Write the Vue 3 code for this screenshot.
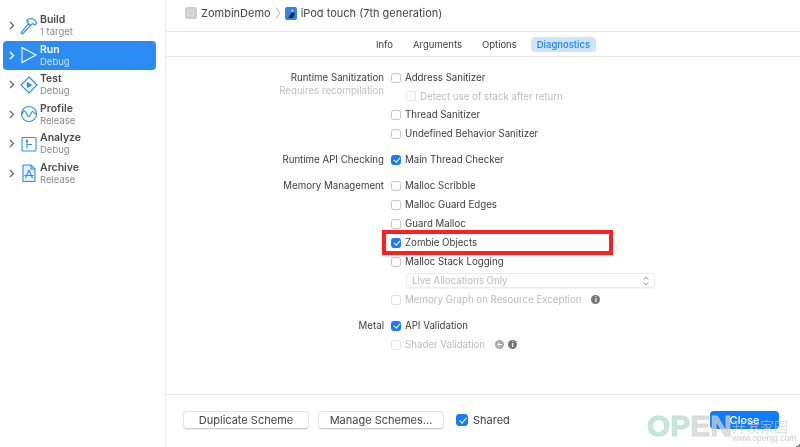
<script setup>
const actions = [
  { id: 'build', title: 'Build', sub: '1 target' },
  { id: 'run', title: 'Run', sub: 'Debug', active: true },
  { id: 'test', title: 'Test', sub: 'Debug' },
  { id: 'profile', title: 'Profile', sub: 'Release' },
  { id: 'analyze', title: 'Analyze', sub: 'Debug' },
  { id: 'archive', title: 'Archive', sub: 'Release' },
]
const tabs = ['Info', 'Arguments', 'Options', 'Diagnostics']
</script>

<template>
  <div class="window">
    <aside class="sidebar">
      <div v-for="a in actions" :key="a.id" class="action" :class="{ active: a.active }">
        <svg class="chev" width="6" height="9" viewBox="0 0 6 9"><path d="M1 1l3.5 3.5L1 8" fill="none" stroke="currentColor" stroke-width="1.3" /></svg>
        <svg class="act-icon" width="18" height="18" viewBox="0 0 18 18" fill="none" stroke="currentColor" stroke-width="1.1">
          <template v-if="a.id === 'build'">
            <path d="M2.5 17l-1.5-1.2L8.3 6.8l2.2 1.7z" />
            <path d="M6.5 3.6C9 1 12.5 1 15 3.2l1.8 3-2.2 1.8-1.8-1.6-2.2 2-3-2.6.6-1.4z" />
          </template>
          <path v-else-if="a.id === 'run'" d="M2 1.5L16 9 2 16.5z" />
          <template v-else-if="a.id === 'test'">
            <path d="M9 1l8 8-8 8-8-8z" stroke-width="1.2" />
            <path d="M6.8 5.5l5.5 3.5-5.5 3.5z" fill="currentColor" stroke="none" />
          </template>
          <template v-else-if="a.id === 'profile'">
            <circle cx="9" cy="9" r="7.5" />
            <path d="M1.8 9.5c1.5-4 3-4.5 4.5-1.5s2.5 5 4 2 2-4.5 3-3 1.5 2 3 1.5" />
          </template>
          <template v-else-if="a.id === 'analyze'">
            <rect x="2" y="2.5" width="14" height="13.5" rx="1" />
            <path d="M7 5.5v8M7 9.5h5M5.8 6.5L7 5l1.2 1.5" />
          </template>
          <template v-else>
            <path d="M3 1h8l4 4v12.5H3z" fill="currentColor" fill-opacity="0.12" />
            <path d="M11 1v4h4" />
            <path d="M9 6l-3.5 8M9 6l3.5 8M4.5 11.5h9" />
          </template>
        </svg>
        <div class="act-text">
          <div class="act-title">{{ a.title }}</div>
          <div class="act-sub">{{ a.sub }}</div>
        </div>
      </div>
    </aside>

    <main class="main">
      <header class="crumbs">
        <span class="proj-icon"><span></span></span>
        <span>ZombinDemo</span>
        <svg width="6" height="12" viewBox="0 0 6 12"><path d="M1 .5L5 6 1 11.5" fill="none" stroke="#9a9a9a" stroke-width="0.8" /></svg>
        <svg class="dev-icon" width="12" height="13" viewBox="0 0 12 13">
          <rect width="12" height="13" rx="2" fill="#2f86e6" />
          <path d="M3 11l4-6 3 1-2 5z" fill="#1b2433" />
          <path d="M6 2.5l2.5 1-1 2z" fill="#e6f0ff" />
        </svg>
        <span>iPod touch (7th generation)</span>
      </header>

      <nav class="tabs">
        <span v-for="t in tabs" :key="t" class="tab" :class="{ on: t === 'Diagnostics' }">{{ t }}</span>
      </nav>

      <section class="form">
        <div class="group">
          <div class="label">Runtime Sanitization<small>Requires recompilation</small></div>
          <div class="opts">
            <label class="row"><i class="box"></i>Address Sanitizer</label>
            <label class="row off sub short"><i class="box"></i>Detect use of stack after return</label>
            <label class="row"><i class="box"></i>Thread Sanitizer</label>
            <label class="row"><i class="box"></i>Undefined Behavior Sanitizer</label>
          </div>
        </div>
        <div class="group">
          <div class="label">Runtime API Checking</div>
          <div class="opts">
            <label class="row"><i class="box checked"></i>Main Thread Checker</label>
          </div>
        </div>
        <div class="group">
          <div class="label">Memory Management</div>
          <div class="opts">
            <label class="row"><i class="box"></i>Malloc Scribble</label>
            <label class="row"><i class="box"></i>Malloc Guard Edges</label>
            <label class="row"><i class="box"></i>Guard Malloc</label>
            <label class="row zombie"><i class="box checked"></i>Zombie Objects<b class="redbox"></b></label>
            <label class="row"><i class="box"></i>Malloc Stack Logging</label>
            <div class="row sub">
              <div class="select">Live Allocations Only
                <svg width="6" height="10" viewBox="0 0 6 10"><path d="M.8 3.5L3 1.2l2.2 2.3M.8 6.5L3 8.8l2.2-2.3" fill="none" stroke="#8a8a8a" stroke-width="1" /></svg>
              </div>
            </div>
            <label class="row off"><i class="box"></i>Memory Graph on Resource Exception<span class="info">i</span></label>
          </div>
        </div>
        <div class="group">
          <div class="label">Metal</div>
          <div class="opts">
            <label class="row"><i class="box checked"></i>API Validation</label>
            <label class="row off"><i class="box"></i>Shader Validation
              <svg class="go" width="9" height="9" viewBox="0 0 9 9"><circle cx="4.5" cy="4.5" r="4.5" fill="#a8a8a8" /><path d="M7 4.5H2.5M4.5 2.5l-2 2 2 2" fill="none" stroke="#fff" stroke-width="1" /></svg>
              <span class="info tight">i</span>
            </label>
          </div>
        </div>
      </section>

      <footer class="footer">
        <button class="btn dup">Duplicate Scheme</button>
        <button class="btn mng">Manage Schemes...</button>
        <label class="shared"><i class="box checked big"></i>Shared</label>
        <button class="close">Close</button>
      </footer>
    </main>

    <div class="mark">
      <span class="mark-open"><span class="green">OP</span><span class="gray">EN</span></span>
      <span class="mark-cn">开发家园<em>www.openjg.com</em></span>
    </div>
    <span class="corner"></span>
  </div>
</template>

<style>
html, body { margin: 0; background: #fff; }
</style>

<style scoped>
.window {
  position: relative;
  display: flex;
  width: 800px;
  height: 447px;
  overflow: hidden;
  background: #fff;
  color: #3c3c3c;
  font-family: Inter, "Liberation Sans", sans-serif;
  font-size: 10px;
  filter: blur(0.3px);
}
.sidebar {
  box-sizing: border-box;
  width: 166px;
  flex: none;
  padding: 11px 9px 0 3px;
  background: #fff;
  border-right: 1px solid #ececec;
}
.action {
  display: flex;
  align-items: center;
  height: 29.5px;
  border-radius: 4px;
  color: #2d8cf4;
}
.action.active { background: #2d8cf4; color: #fff; }
.chev { margin-left: 6px; color: #666; flex: none; }
.active .chev { color: #fff; }
.act-icon { margin: 0 2px 0 5px; flex: none; }
.act-title { font-weight: 600; font-size: 10.5px; line-height: 13px; color: #4a4a4a; }
.act-sub { font-size: 9.5px; line-height: 12px; color: #8a8a8a; }
.active .act-title { color: #fff; }
.active .act-sub { color: #cfe4fc; }

.main { flex: 1; display: flex; flex-direction: column; min-width: 0; }
.crumbs {
  box-sizing: border-box;
  height: 32px;
  flex: none;
  display: flex;
  align-items: center;
  gap: 4px;
  padding: 0 0 5px 19px;
  border-bottom: 1px solid #e6e6e6;
  font-size: 11px;
  color: #444;
}
.proj-icon {
  display: flex;
  align-items: center;
  justify-content: center;
  width: 12px;
  height: 12px;
  border-radius: 2px;
  background: #c9d0d0;
}
.proj-icon span { width: 6px; height: 6px; border: 1px solid #dbe0e0; box-sizing: border-box; }
.tabs {
  box-sizing: border-box;
  height: 25px;
  flex: none;
  display: flex;
  align-items: center;
  justify-content: center;
  gap: 8px;
  border-bottom: 1px solid #e6e6e6;
  font-size: 9.5px;
}
.tab { padding: 2px 6px; border-radius: 4px; }
.tab.on { background: #cfe4fd; color: #1f7ff0; font-weight: 500; }

.form { flex: 1; padding-top: 11px; }
.group { display: flex; margin-bottom: 7px; }
.label {
  box-sizing: border-box;
  width: 225px;
  padding-right: 7px;
  text-align: right;
  line-height: 19px;
  font-size: 9.7px;
}
.label small { display: block; margin-top: -6px; font-size: 9.7px; color: #c0c0c0; }
.opts { flex: 1; }
.row {
  position: relative;
  display: flex;
  align-items: center;
  height: 19px;
  font-size: 9.7px;
}
.row.sub { padding-left: 15px; }
.row.short { height: 18px; }
.row.off { color: #bcbcbc; }
.box {
  box-sizing: border-box;
  width: 10px;
  height: 10px;
  margin-right: 4px;
  border: 1px solid #c6c6c6;
  border-radius: 2.5px;
  background: #fff;
  flex: none;
  position: relative;
}
.row.off .box { border-color: #e2e2e2; }
.box.checked { background: #1a7cf2; border-color: #1a7cf2; }
.box.checked::after {
  content: "";
  position: absolute;
  left: 2.5px;
  top: 0;
  width: 2.5px;
  height: 5px;
  border: solid #fff;
  border-width: 0 1.4px 1.4px 0;
  transform: rotate(40deg);
}
.redbox {
  position: absolute;
  left: -9px;
  top: -3px;
  width: 231px;
  height: 25px;
  box-sizing: border-box;
  border: 4px solid #ff1f1f;
}
.select {
  box-sizing: border-box;
  width: 249px;
  height: 15px;
  display: flex;
  align-items: center;
  justify-content: space-between;
  padding: 0 5px;
  border: 1px solid #ececec;
  border-radius: 3px;
  color: #bcbcbc;
  box-shadow: 0 1px 1px rgba(0, 0, 0, 0.05);
}
.info {
  width: 9px;
  height: 9px;
  margin-left: 10px;
  border-radius: 50%;
  background: #777;
  color: #fff;
  font-size: 7px;
  font-weight: 700;
  line-height: 9px;
  text-align: center;
}
.info.tight { margin-left: 4px; }
.go { margin-left: 10px; }

.footer {
  box-sizing: border-box;
  height: 53px;
  flex: none;
  display: flex;
  align-items: center;
  padding: 0 21px 2px 17px;
  border-top: 1px solid #e6e6e6;
}
.btn {
  box-sizing: border-box;
  width: 126px;
  height: 18px;
  padding: 0;
  border: 1px solid #e4e4e4;
  border-bottom-color: #cfcfcf;
  border-radius: 4px;
  background: #fff;
  color: #444;
  font: inherit;
  font-size: 11px;
  box-shadow: 0 1px 1px rgba(0, 0, 0, 0.08);
}
.mng { margin-left: 9px; }
.shared { display: flex; align-items: center; margin-left: 12px; font-size: 11px; }
.box.big { width: 12px; height: 12px; margin-right: 5px; border-radius: 3px; }
.box.big::after { left: 3.5px; top: 1px; height: 6px; }
.close {
  box-sizing: border-box;
  width: 69px;
  height: 18px;
  margin-left: auto;
  padding: 0;
  border: 0;
  border-radius: 4px;
  background: #0f7bf5;
  color: #fff;
  font: inherit;
  font-size: 11px;
  font-weight: 500;
}

.mark {
  position: absolute;
  left: 647px;
  top: 411px;
  display: flex;
  align-items: flex-start;
  white-space: nowrap;
  pointer-events: none;
}
.mark-open {
  font-family: "Liberation Sans", sans-serif;
  font-weight: 700;
  font-size: 30px;
  line-height: 30px;
  -webkit-text-stroke: 1px currentColor;
}
.green { color: rgba(190, 224, 210, 0.85); }
.gray { color: rgba(205, 210, 208, 0.7); }
.mark-cn {
  display: flex;
  flex-direction: column;
  padding-top: 7px;
  font-family: "Noto Sans CJK SC", sans-serif;
  font-size: 14px;
  line-height: 16px;
  color: rgba(205, 205, 205, 0.65);
}
.mark-cn em {
  font-family: "Liberation Sans", sans-serif;
  font-style: normal;
  font-size: 8.5px;
  line-height: 9px;
  color: rgba(200, 200, 200, 0.9);
}
.corner {
  position: absolute;
  right: 0;
  bottom: 0;
  width: 5px;
  height: 3px;
  background: linear-gradient(to bottom right, transparent 50%, #8a8a8a 50%);
}
</style>
